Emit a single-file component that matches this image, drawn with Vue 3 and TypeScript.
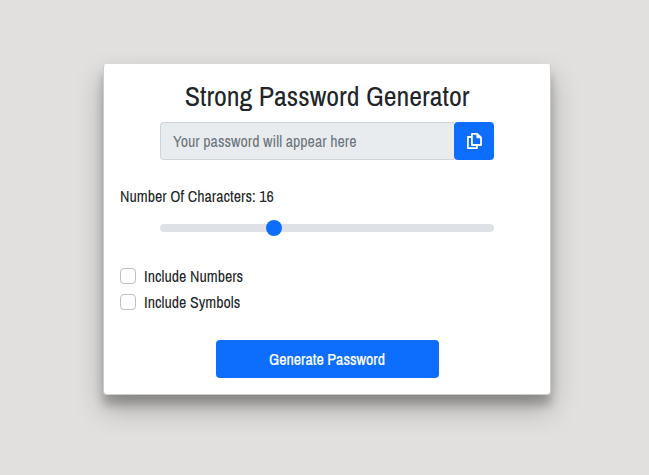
<script setup lang="ts">
import { ref, computed } from 'vue'

const length = ref(16)
const includeNumbers = ref(false)
const includeSymbols = ref(false)
const password = ref('')
const min = 6
const max = 36

const thumbOffset = computed(() => `${((length.value - min) / (max - min)) * 100}%`)

function generate(): void {
  let pool = 'abcdefghijklmnopqrstuvwxyzABCDEFGHIJKLMNOPQRSTUVWXYZ'
  if (includeNumbers.value) pool += '0123456789'
  if (includeSymbols.value) pool += '!@#$%^&*()-_=+'
  password.value = Array.from({ length: length.value }, () => pool[Math.floor(Math.random() * pool.length)]).join('')
}

function step(delta: number): void {
  length.value = Math.min(max, Math.max(min, length.value + delta))
}
</script>

<template>
  <main class="page">
    <section class="card">
      <h1 class="title">Strong Password Generator</h1>
      <div class="output">
        <div class="field">{{ password || 'Your password will appear here' }}</div>
        <button class="copy" type="button" aria-label="Copy">
          <svg width="16" height="16" viewBox="0 0 16 16" fill="none" stroke="#fff" stroke-width="1.8" stroke-linejoin="round">
            <path d="M5.9 0.9H11.2L15 4.5V12H5.9Z" />
            <path d="M10.9 1V4.8H15Z" fill="#fff" stroke-width="0.9" />
            <path d="M5.4 4H1.9V15.1H11V12.4" />
          </svg>
        </button>
      </div>
      <p class="count">Number Of Characters: {{ length }}</p>
      <div class="slider" tabindex="0" @keydown.left="step(-1)" @keydown.right="step(1)">
        <div class="rail"><i class="thumb" :style="{ left: thumbOffset }"></i></div>
      </div>
      <div class="options">
        <label class="option">
          <input v-model="includeNumbers" type="checkbox" class="check" />
          <span>Include Numbers</span>
        </label>
        <label class="option">
          <input v-model="includeSymbols" type="checkbox" class="check" />
          <span>Include Symbols</span>
        </label>
      </div>
      <button class="generate" type="button" @click="generate">Generate Password</button>
    </section>
  </main>
</template>

<style>
body {
  margin: 0;
  background: #e1e0de;
}
</style>

<style scoped>
* {
  box-sizing: border-box;
}
.page {
  height: 475px;
  padding: 64px 98px 0 103px;
  background: #e1e0de;
  color: #212529;
  font: 16px/24px "Archivo Narrow", "Liberation Sans Narrow", "Liberation Sans", sans-serif;
}
.card {
  height: 331px;
  padding: 14px 16px 15px;
  display: flex;
  flex-direction: column;
  background: #fff;
  border: 1px solid rgba(0, 0, 0, 0.2);
  border-top-color: #fff;
  border-radius: 4px;
  box-shadow: 0 14px 28px rgba(0, 0, 0, 0.25), 0 10px 10px rgba(0, 0, 0, 0.22);
}
.title {
  margin: 0 0 9px;
  height: 34px;
  font-size: 28px;
  font-weight: 400;
  line-height: 34px;
  text-align: center;
}
.output {
  display: flex;
  height: 38px;
  margin: 0 40px;
}
.field {
  flex: 1;
  padding: 6px 12px;
  background: #e9ecef;
  border: 1px solid #ced4da;
  border-right: 0;
  border-radius: 4px 0 0 4px;
  color: #6c757d;
}
.copy {
  width: 40px;
  padding: 0;
  display: flex;
  align-items: center;
  justify-content: center;
  border: 0;
  border-radius: 4px;
  background: #0d6efd;
}
.count {
  margin: 24px 0 0;
}
.slider {
  height: 24px;
  margin: 8px 40px 0;
  padding: 8px 0;
  outline: none;
}
.rail {
  position: relative;
  height: 8px;
  border-radius: 8px;
  background: #dee2e6;
}
.thumb {
  position: absolute;
  top: -4px;
  width: 16px;
  height: 16px;
  margin-left: -5px;
  border-radius: 50%;
  background: #0d6efd;
}
.options {
  margin-top: 24px;
  display: flex;
  flex-direction: column;
  gap: 2px;
}
.option {
  display: flex;
  align-items: center;
  gap: 8px;
  height: 24px;
}
.check {
  appearance: none;
  width: 16px;
  height: 16px;
  margin: 0;
  border: 1px solid #bfbfbf;
  border-radius: 4px;
  background: #fff;
}
.check:checked {
  background: #0d6efd;
}
.generate {
  align-self: center;
  width: 223px;
  height: 38px;
  margin-top: 26px;
  padding: 0;
  border: 0;
  border-radius: 4px;
  background: #0d6efd;
  color: #fff;
  font: inherit;
  -webkit-text-stroke: 0.2px #fff;
}
</style>
